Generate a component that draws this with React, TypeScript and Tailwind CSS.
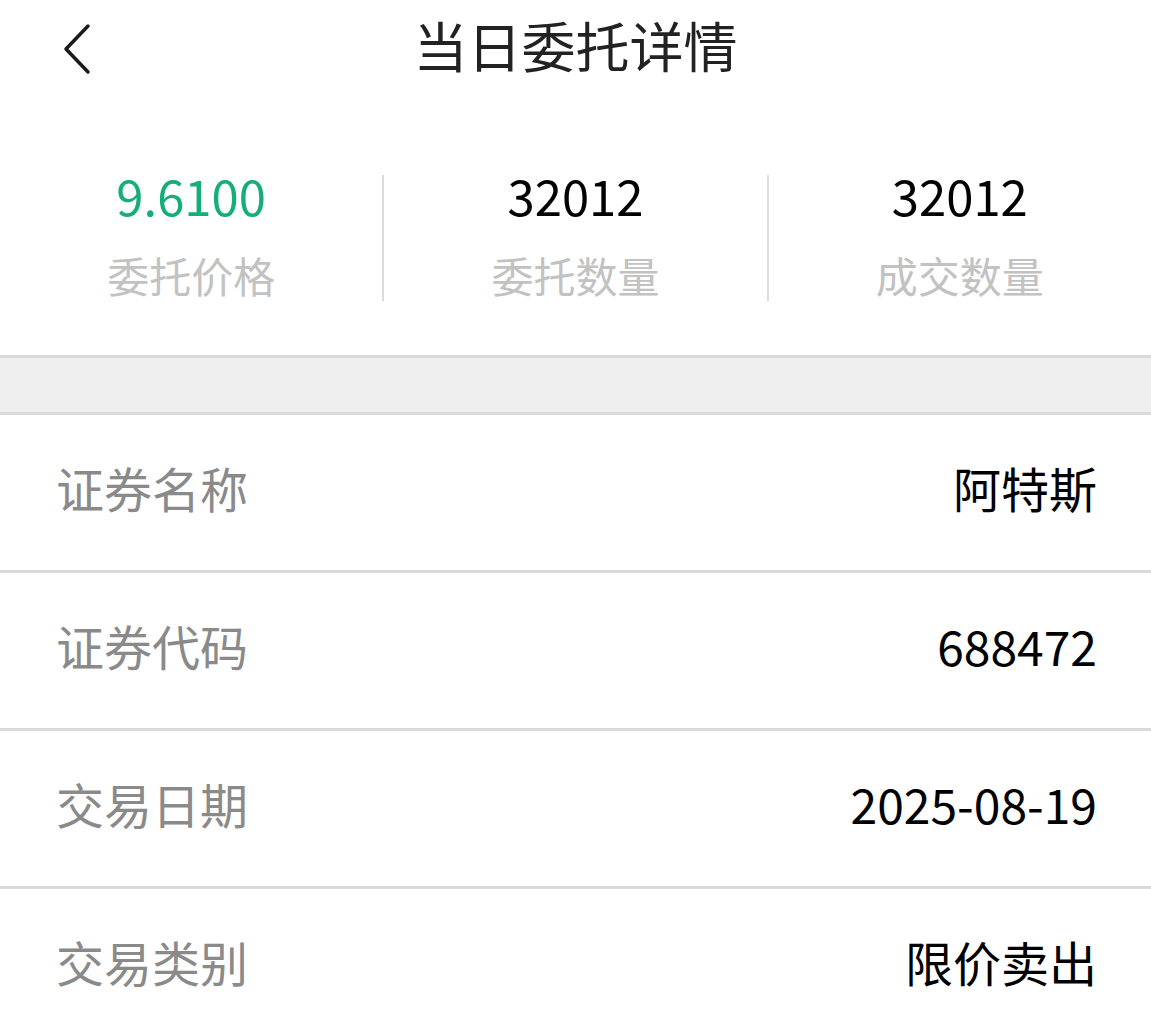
import React from "react";

const font = { fontFamily: '"Noto Sans CJK SC", "Noto Sans", sans-serif' };

const stats = [
  { value: "9.6100", label: "委托价格", green: true },
  { value: "32012", label: "委托数量" },
  { value: "32012", label: "成交数量" },
];

const rows = [
  { label: "证券名称", value: "阿特斯" },
  { label: "证券代码", value: "688472" },
  { label: "交易日期", value: "2025-08-19" },
  { label: "交易类别", value: "限价卖出" },
];

export default function App() {
  return (
    <div className="w-[1151px] h-[1020px] overflow-hidden bg-white" style={font}>
      {/* Header */}
      <header className="relative flex h-[96px] items-center justify-center">
        <button className="absolute left-[56px] top-[18px] p-1">
          <svg width="32" height="54" viewBox="0 0 32 54" fill="none">
            <path d="M28 4 L6 27 L28 50" stroke="#1a1a1a" strokeWidth="3.5" strokeLinecap="round" strokeLinejoin="round" />
          </svg>
        </button>
        <h1 className="text-[54px] leading-none text-[#222222] -mt-[6px]">当日委托详情</h1>
      </header>

      {/* Stats */}
      <section className="flex h-[259px] pt-[79px]">
        {stats.map((s, i) => (
          <div key={i} className={`flex h-[126px] flex-1 flex-col items-center ${i > 0 ? "border-l-2 border-[#dcdcdc]" : ""}`}>
            <div className={`text-[49px] leading-none mt-[-5px] ${s.green ? "text-[#16ae78]" : "text-black"}`}>{s.value}</div>
            <div className="mt-[35px] text-[42px] leading-none text-[#c2c2c2]">{s.label}</div>
          </div>
        ))}
      </section>

      {/* Divider band */}
      <div className="h-[60px] border-y-[3px] border-[#dadada] bg-[#efefef]" />

      {/* Detail rows */}
      <section>
        {rows.map((r, i) => (
          <div key={i} className="flex h-[158px] items-center justify-between border-b-[3px] border-[#dadada] pl-[56px] pr-[54px]">
            <span className="text-[48px] leading-none text-[#8a8a8a] -mt-[12px]">{r.label}</span>
            <span className="text-[48px] leading-none text-black -mt-[12px]">{r.value}</span>
          </div>
        ))}
      </section>
    </div>
  );
}
